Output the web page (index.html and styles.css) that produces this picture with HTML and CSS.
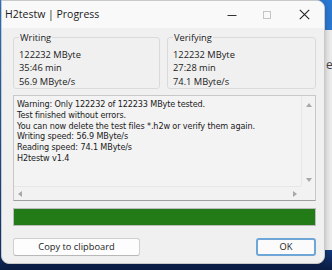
FILE: index.html
```html
<!DOCTYPE html>
<html>
<head>
<meta charset="utf-8">
<link rel="stylesheet" href="styles.css">
</head>
<body>
<div class="behind"><span class="behind-e">e</span></div>
<div class="window">
  <div class="titlebar">
    <span class="title">H2testw | Progress</span>
    <div class="controls">
      <span class="ctl ctl-min"><svg width="10" height="10" viewBox="0 0 10 10"><path d="M0.5 5.5H9.5" stroke="#333" stroke-width="1"/></svg></span>
      <span class="ctl ctl-max"><svg width="10" height="10" viewBox="0 0 10 10"><rect x="1.5" y="1.5" width="7" height="7" fill="none" stroke="#c4c4c4" stroke-width="1"/></svg></span>
      <span class="ctl ctl-close"><svg width="11" height="11" viewBox="0 0 11 11"><path d="M0.8 0.8L10.2 10.2M10.2 0.8L0.8 10.2" stroke="#222" stroke-width="1.1"/></svg></span>
    </div>
  </div>
  <div class="content">
    <div class="groups">
      <fieldset class="group">
        <legend>Writing</legend>
        <div class="val">122232 MByte</div>
        <div class="val">35:46 min</div>
        <div class="val">56.9 MByte/s</div>
      </fieldset>
      <fieldset class="group">
        <legend>Verifying</legend>
        <div class="val">122232 MByte</div>
        <div class="val">27:28 min</div>
        <div class="val">74.1 MByte/s</div>
      </fieldset>
    </div>
    <div class="log">
      <div class="log-text">
        <div>Warning: Only 122232 of 122233 MByte tested.</div>
        <div>Test finished without errors.</div>
        <div>You can now delete the test files *.h2w or verify them again.</div>
        <div>Writing speed: 56.9 MByte/s</div>
        <div>Reading speed: 74.1 MByte/s</div>
        <div>H2testw v1.4</div>
      </div>
      <div class="vscroll">
        <span class="arr arr-up"></span>
        <span class="arr arr-down"></span>
      </div>
      <div class="hscroll">
        <span class="arr arr-left"></span>
        <span class="arr arr-right"></span>
      </div>
      <div class="corner"></div>
    </div>
    <div class="progress"><div class="progress-fill"></div></div>
    <div class="buttons">
      <button class="btn btn-copy">Copy to clipboard</button>
      <button class="btn btn-ok">OK</button>
    </div>
  </div>
</div>
</body>
</html>
```
FILE: styles.css
```css
html, body {
  margin: 0;
  padding: 0;
}
body {
  width: 332px;
  height: 270px;
  overflow: hidden;
  position: relative;
  background: linear-gradient(180deg, #2a78d2 0px, #2a78d2 30px, #14387a 250px, #0b1d44 270px);
  font-family: "Open Sans", "Noto Sans", sans-serif;
}
.behind {
  position: absolute;
  left: 318px;
  top: 30px;
  width: 30px;
  height: 220px;
  background: #ececec;
  border-radius: 6px;
}
.behind-e {
  position: absolute;
  left: 8px;
  top: 26px;
  font-size: 12px;
  color: #444;
}
.window {
  position: absolute;
  left: 1px;
  top: 0;
  width: 324px;
  height: 264px;
  background: #f0f0f0;
  border: 1px solid #c9c9c9;
  box-sizing: border-box;
  border-radius: 0 8px 8px 8px;
  overflow: hidden;
  box-shadow: 0 2px 6px rgba(0,0,0,0.25);
}
.titlebar {
  height: 27px;
  background: #f9f9f9;
  display: flex;
  align-items: center;
  justify-content: space-between;
}
.title {
  padding-left: 3px;
  font-size: 10.5px;
  color: #1a1a1a;
  margin-top: -1px;
}
.controls {
  display: flex;
  align-items: center;
  height: 100%;
}
.ctl {
  display: flex;
  align-items: center;
  justify-content: center;
  width: 35px;
  height: 100%;
}
.ctl svg { display: block; }
.ctl-close { width: 40px; }
.content {
  padding: 0 8px 0 11px;
}
.groups {
  display: grid;
  grid-template-columns: 147px 149px;
  gap: 7px;
  margin-top: 4px;
}
.group {
  margin: 0;
  border: 1px solid #dadada;
  border-radius: 3px;
  padding: 5px 5px 0 5px;
  height: 57px;
  box-sizing: border-box;
  min-width: 0;
}
.group legend {
  padding: 0 1px;
  margin-left: 0;
  font-size: 9.3px;
  color: #1a1a1a;
  line-height: 11px;
}
.val {
  font-size: 9.3px;
  line-height: 13.3px;
  color: #1a1a1a;
}
.log {
  margin-top: 6px;
  height: 106px;
  box-sizing: border-box;
  border: 1px solid #c8c8c8;
  border-bottom-color: #a0a0a0;
  background: #f3f3f3;
  display: grid;
  grid-template-columns: 1fr 14px;
  grid-template-rows: 1fr 14px;
}
.log-text {
  padding: 3px 0 0 3px;
  font-family: "DejaVu Sans", sans-serif;
  font-size: 8.1px;
  line-height: 10.8px;
  color: #1a1a1a;
  white-space: nowrap;
  overflow: hidden;
  letter-spacing: -0.12px;
}
.vscroll {
  position: relative;
  border-left: 1px solid #e6e6e6;
  background: #f2f2f2;
}
.hscroll {
  position: relative;
  background: #f2f2f2;
  border-top: 1px solid #e6e6e6;
}
.corner { background: #f2f2f2; }
.arr {
  position: absolute;
  width: 0;
  height: 0;
}
.arr-up {
  left: 4px;
  top: 7px;
  border-left: 3px solid transparent;
  border-right: 3px solid transparent;
  border-bottom: 4px solid #a8a8a8;
}
.arr-down {
  left: 4px;
  bottom: 4px;
  border-left: 3px solid transparent;
  border-right: 3px solid transparent;
  border-top: 4px solid #a8a8a8;
}
.arr-left {
  left: 4px;
  top: 4px;
  border-top: 3px solid transparent;
  border-bottom: 3px solid transparent;
  border-right: 4px solid #a8a8a8;
}
.arr-right {
  right: 4px;
  top: 4px;
  border-top: 3px solid transparent;
  border-bottom: 3px solid transparent;
  border-left: 4px solid #a8a8a8;
}
.progress {
  margin-top: 7px;
  height: 18px;
  box-sizing: border-box;
  border: 1px solid #bcbcbc;
  background: #e6e6e6;
}
.progress-fill {
  height: 100%;
  width: 100%;
  background: #227b16;
}
.buttons {
  margin-top: 12px;
  display: flex;
  justify-content: space-between;
}
.btn {
  height: 18px;
  box-sizing: border-box;
  font-family: "Open Sans", "Noto Sans", sans-serif;
  font-size: 9.3px;
  color: #1a1a1a;
  background: #fdfdfd;
  border: 1px solid #d0d0d0;
  border-bottom-color: #b8b8b8;
  border-radius: 3px;
  padding: 0;
  line-height: 14px;
}
.btn-copy { width: 127px; }
.btn-ok {
  width: 60px;
  border: 2px solid #6fa6d8;
  background: #fbfbfb;
}
```
